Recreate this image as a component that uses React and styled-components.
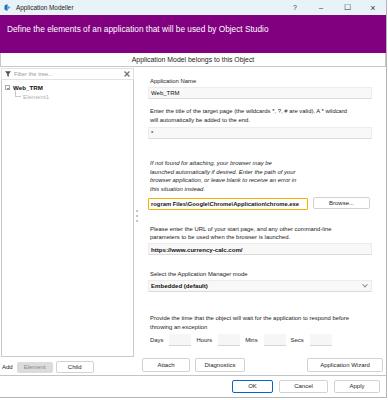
import React from "react";
import styled, { createGlobalStyle } from "styled-components";

const GlobalStyle = createGlobalStyle`
  html, body {
    margin: 0;
    padding: 0;
    background: #fff;
  }
  body {
    font-family: "Liberation Sans", Arial, sans-serif;
    color: #1e1e1e;
    overflow: hidden;
  }
`;

const Window = styled.div`
  width: 387px;
  height: 398px;
  box-sizing: border-box;
  display: flex;
  flex-direction: column;
  border-right: 1px solid #b5b5b5;
  border-bottom: 1px solid #b5b5b5;
  background: #fff;
`;

const TitleBar = styled.div`
  height: 15px;
  flex: none;
  display: flex;
  align-items: center;
  background: #e8f3f8;
  font-size: 6.4px;
  color: #222;
  .title {
    flex: 1;
    margin-left: 5px;
  }
`;

const Control = styled.div`
  width: 26px;
  height: 15px;
  display: flex;
  align-items: center;
  justify-content: center;
  font-size: ${({ $size }) => $size || 8}px;
  color: #333;
`;

const Banner = styled.div`
  height: 38px;
  flex: none;
  box-sizing: border-box;
  padding: 9px 7px 0;
  background: #800080;
  color: #fff;
  font-size: 8.3px;
  white-space: nowrap;
`;

const ModelBar = styled.div`
  height: 14px;
  flex: none;
  box-sizing: border-box;
  border: 1px solid #c8c8c8;
  border-top: none;
  display: flex;
  align-items: center;
  justify-content: center;
  font-size: 6.9px;
  color: #222;
`;

const Body = styled.div`
  flex: 1;
  min-height: 0;
  display: flex;
`;

const LeftPane = styled.div`
  width: 134px;
  flex: none;
  display: flex;
  flex-direction: column;
  padding: 1px 0 0 1px;
  box-sizing: border-box;
`;

const FilterBox = styled.div`
  height: 12px;
  flex: none;
  box-sizing: border-box;
  border: 1px solid #e2e2e2;
  display: flex;
  align-items: center;
  padding: 0 3px 0 3px;
  font-size: 5.8px;
  color: #9a9a9a;
  span {
    flex: 1;
    margin-left: 3px;
  }
`;

const Tree = styled.div`
  flex: 1;
  box-sizing: border-box;
  border: 1px solid #c9c9c9;
  border-top: none;
  padding: 3px 0 0 3px;
`;

const TreeRow = styled.div`
  display: flex;
  align-items: center;
  height: ${({ $h }) => $h || 8}px;
  padding-left: ${({ $indent }) => $indent || 0}px;
  font-size: 6.2px;
  font-weight: ${({ $bold }) => ($bold ? 700 : 400)};
  color: ${({ $muted }) => ($muted ? "#b0b0b0" : "#111")};
`;

const Expander = styled.span`
  width: 5px;
  height: 5px;
  box-sizing: border-box;
  border: 1px solid #a8a8a8;
  margin-right: 3px;
  position: relative;
  &::after {
    content: "";
    position: absolute;
    left: 0.5px;
    right: 0.5px;
    top: 1.5px;
    height: 1px;
    background: #888;
  }
`;

const Branch = styled.span`
  width: 5px;
  height: 6px;
  margin: -5px 2px 0 0;
  border-left: 1px solid #c8c8c8;
  border-bottom: 1px solid #c8c8c8;
`;

const AddRow = styled.div`
  height: 18px;
  flex: none;
  display: flex;
  align-items: center;
  gap: 3px;
  padding-left: 1px;
  font-size: 6px;
  padding-top: 2px;
  box-sizing: border-box;
`;

const Button = styled.div`
  width: ${({ $w }) => $w}px;
  height: ${({ $h }) => $h || 13}px;
  box-sizing: border-box;
  display: flex;
  align-items: center;
  justify-content: center;
  font-size: 6px;
  border-radius: 2px;
  border: 1px solid ${({ $primary, $flat }) =>
    $primary ? "#0a64c4" : $flat ? "#dcdcdc" : "#d2d2d2"};
  background: ${({ $flat }) => ($flat ? "#dcdcdc" : "#fff")};
  color: ${({ $flat }) => ($flat ? "#8a8a8a" : "#1e1e1e")};
  margin-left: ${({ $ml }) => $ml || 0}px;
`;

const Splitter = styled.div`
  width: 6px;
  flex: none;
  display: flex;
  flex-direction: column;
  align-items: center;
  justify-content: center;
  gap: 3px;
  padding-bottom: 10px;
  span {
    width: 2px;
    height: 2px;
    background: #c4c4c4;
  }
`;

const RightPane = styled.div`
  flex: 1;
  display: flex;
  flex-direction: column;
  padding: 10px 3px 3px 2px;
  box-sizing: border-box;
`;

const Field = styled.div`
  margin-top: ${({ $top }) => $top || 0}px;
  padding-left: 6px;
  width: 230px;
`;

const Label = styled.div`
  font-size: 5.9px;
  line-height: 8.6px;
  padding-left: 2px;
  font-style: ${({ $italic }) => ($italic ? "italic" : "normal")};
  white-space: nowrap;
  color: #222;
`;

const Input = styled.div`
  margin-top: ${({ $gap }) => $gap || 1}px;
  width: ${({ $w }) => $w || 224}px;
  height: 12px;
  box-sizing: border-box;
  display: flex;
  align-items: center;
  padding-left: 2px;
  font-size: ${({ $size }) => $size || 6}px;
  font-weight: ${({ $strong }) => ($strong ? 700 : 400)};
  background: ${({ $focus }) => ($focus ? "#fff" : "#f8f8f8")};
  border: 1px solid ${({ $focus }) => ($focus ? "#f2b300" : "#ececec")};
  border-bottom-color: ${({ $focus }) => ($focus ? "#f2b300" : "#dadada")};
  border-radius: 1px;
  white-space: nowrap;
  overflow: hidden;
  color: #111;
`;

const PathRow = styled.div`
  display: flex;
  align-items: center;
  gap: 5px;
  margin-top: 3px;
`;

const Chevron = styled.span`
  margin-left: auto;
  margin-right: 4px;
  width: 3px;
  height: 3px;
  border-right: 1px solid #888;
  border-bottom: 1px solid #888;
  transform: rotate(45deg) translate(-1px, -1px);
`;

const TimeRow = styled.div`
  display: flex;
  align-items: center;
  height: 13px;
  margin-top: 2px;
  padding-left: 2px;
  font-size: 5.9px;
`;

const TimeBox = styled.div`
  width: 22px;
  height: 12px;
  box-sizing: border-box;
  background: #f6f6f6;
  border-bottom: 1px solid #d6d6d6;
  margin: 0 5px 0 6px;
`;

const ActionRow = styled.div`
  margin-top: auto;
  display: flex;
  align-items: center;
  gap: 5px;
`;

const Footer = styled.div`
  height: 22px;
  flex: none;
  box-sizing: border-box;
  border-top: 1px solid #c4c4c4;
  display: flex;
  align-items: center;
  justify-content: flex-end;
  padding: 0 6px 1px 0;
  gap: 6px;
`;

function AppIcon() {
  return (
    <svg width="7" height="7" viewBox="0 0 7 7" style={{ marginLeft: 4 }}>
      <path d="M0.5 1.5 L3.5 0 L3.5 7 L0.5 5.5 Z" fill="#1f6fc0" />
      <path d="M3.5 1.5 L6.5 3.5 L3.5 5.5 Z" fill="#4ea4e6" />
    </svg>
  );
}

function Funnel() {
  return (
    <svg width="6" height="6" viewBox="0 0 6 6">
      <path d="M0 0.3 H6 L3.8 3 V5.8 L2.2 5 V3 Z" fill="#555" />
    </svg>
  );
}

function Clear() {
  return (
    <svg width="6" height="6" viewBox="0 0 6 6">
      <path d="M0.6 0.6 L5.4 5.4 M5.4 0.6 L0.6 5.4" stroke="#777" strokeWidth="1.4" />
    </svg>
  );
}

export default function App() {
  return (
    <>
      <GlobalStyle />
      <Window>
        <TitleBar>
          <AppIcon />
          <span className="title">Application Modeller</span>
          <Control $size={7}>?</Control>
          <Control>–</Control>
          <Control $size={8}>☐</Control>
          <Control $size={9}>×</Control>
        </TitleBar>

        <Banner>Define the elements of an application that will be used by Object Studio</Banner>
        <ModelBar>Application Model belongs to this Object</ModelBar>

        <Body>
          <LeftPane>
            <FilterBox>
              <Funnel />
              <span>Filter the tree...</span>
              <Clear />
            </FilterBox>
            <Tree>
              <TreeRow $bold $h={9}>
                <Expander />
                Web_TRM
              </TreeRow>
              <TreeRow $muted $indent={10}>
                <Branch />
                Element1
              </TreeRow>
            </Tree>
            <AddRow>
              <span>Add</span>
              <Button $w={36} $h={11} $flat $ml={1}>Element</Button>
              <Button $w={38} $h={12}>Child</Button>
            </AddRow>
          </LeftPane>

          <Splitter>
            <span />
            <span />
            <span />
          </Splitter>

          <RightPane>
            <Field>
              <Label>Application Name</Label>
              <Input $gap={1.5}>Web_TRM</Input>
            </Field>

            <Field $top={8}>
              <Label>
                Enter the title of the target page (the wildcards *, ?, # are valid). A * wildcard
                <br />
                will automatically be added to the end.
              </Label>
              <Input $gap={3}>*</Input>
            </Field>

            <Field $top={20}>
              <Label $italic>
                If not found for attaching, your browser may be
                <br />
                launched automatically if desired. Enter the path of your
                <br />
                browser application, or leave blank to receive an error in
                <br />
                this situation instead.
              </Label>
              <PathRow>
                <Input $w={160} $gap={0} $focus $strong $size={5.85}>
                  rogram Files\Google\Chrome\Application\chrome.exe
                </Input>
                <Button $w={57} $h={12}>Browse...</Button>
              </PathRow>
            </Field>

            <Field $top={15}>
              <Label>
                Please enter the URL of your start page, and any other command-line
                <br />
                parameters to be used when the browser is launched.
              </Label>
              <Input $gap={1.5} $strong $size={6.1}>https://www.currency-calc.com/</Input>
            </Field>

            <Field $top={14.5}>
              <Label>Select the Application Manager mode</Label>
              <Input $gap={1.5} $strong $size={6.1}>
                Embedded (default)
                <Chevron />
              </Input>
            </Field>

            <Field $top={22.5}>
              <Label>
                Provide the time that the object will wait for the application to respond before
                <br />
                throwing an exception
              </Label>
              <TimeRow>
                Days
                <TimeBox />
                Hours
                <TimeBox />
                Mins
                <TimeBox />
                Secs
                <TimeBox />
              </TimeRow>
            </Field>

            <ActionRow>
              <Button $w={48} $h={14}>Attach</Button>
              <Button $w={50} $h={14}>Diagnostics</Button>
              <Button $w={76} $h={14} $ml={57}>Application Wizard</Button>
            </ActionRow>
          </RightPane>
        </Body>

        <Footer>
          <Button $w={41} $primary>OK</Button>
          <Button $w={49}>Cancel</Button>
          <Button $w={46}>Apply</Button>
        </Footer>
      </Window>
    </>
  );
}
